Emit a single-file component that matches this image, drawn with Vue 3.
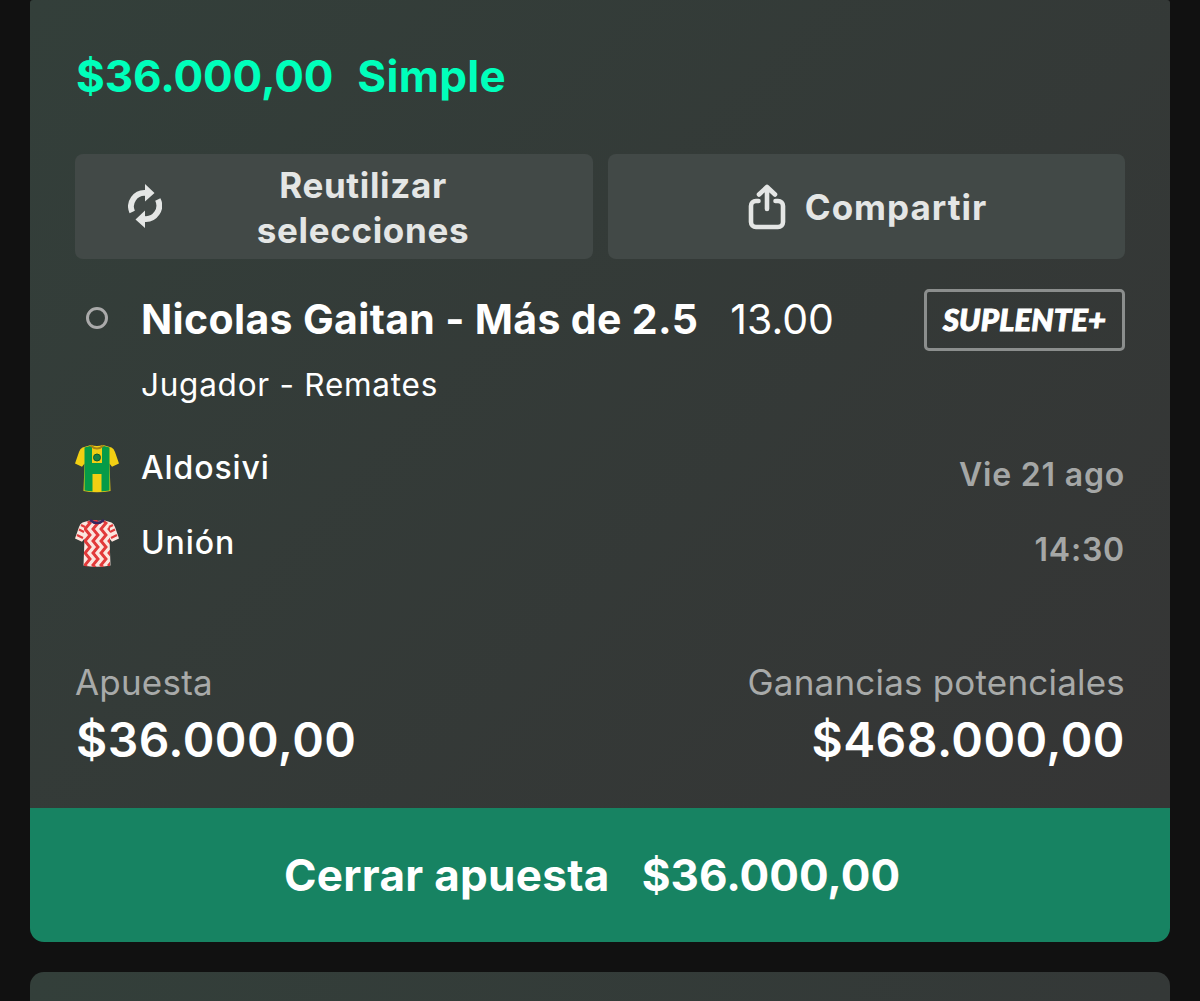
<script setup>
// Left edges of the zigzag stripes on the Unión shirt
const stripes = [-6, 2, 10, 18, 26, 34, 42]
</script>

<template>
  <main class="page">
    <section class="card">
      <div class="body">
        <header class="head"><span class="stake">$36.000,00</span><span>Simple</span></header>
        <div class="actions">
          <button class="btn reuse">
            <svg width="34" height="46" viewBox="0 0 34 46" fill="none">
              <path d="M4.200 29A13.500 13.500 0 0 1 17.500 10M29.800 16.500A13.500 13.500 0 0 1 16.500 36" stroke="#e4e6e5" stroke-width="5.800" />
              <path d="M17 1 26.500 10 17 18.500ZM17 27.500 7.500 36.500 17 45Z" fill="#e4e6e5" />
            </svg>
            <span class="reuse-text">Reutilizar<br />selecciones</span>
          </button>
          <button class="btn share">
            <svg width="38" height="46" viewBox="0 0 38 46" fill="none" stroke="#e4e6e5" stroke-width="4.600" stroke-linecap="round" stroke-linejoin="round">
              <path d="M10.500 17H8a5 5 0 0 0-5 5v16a5 5 0 0 0 5 5h22a5 5 0 0 0 5-5V22a5 5 0 0 0-5-5h-2.500M19 25V3.500M11 10.500l8-7.500 8 7.500" />
            </svg>
            <span>Compartir</span>
          </button>
        </div>
        <div class="selection">
          <i class="dot"></i>
          <span class="pick">Nicolas Gaitan - Más de 2.5</span>
          <span class="odds">13.00</span>
          <span class="badge">SUPLENTE+</span>
        </div>
        <p class="market">Jugador - Remates</p>
        <div class="team">
          <svg class="shirt" width="44" height="50" viewBox="0 0 44 50">
            <path d="M16 2 7.500 4.500Q5 5.500 4 9L0 20.500l7 3.200 2.500-3.200-1 27.500q13.500 2.400 27 0l-1-27.500 2.500 3.200 7-3.200-4-11.500q-1-3.500-3.500-4.500L28 2q-6 2-12 0Z" fill="#f2cf13" />
            <path d="M9.500 4.500 17 2.500V20h10V2.500l7.500 2V47.500q-4 .7-8 1V31h-9v17.500q-4-.3-8-1Z" fill="#069b48" />
            <path d="M15.500 2.500q6.500 6 13 0" fill="none" stroke="#a78315" stroke-width="2" />
            <circle cx="22" cy="14.500" r="3.500" fill="#198245" stroke="#0b5b35" />
          </svg>
          <span>Aldosivi</span><time>Vie 21 ago</time>
        </div>
        <div class="team">
          <svg class="shirt" width="44" height="50" viewBox="0 0 44 50">
            <clipPath id="torso"><path d="M9 5 16 2h12l7 3v43q-13 2-26 0Z" /></clipPath>
            <path d="M16 2 7.500 4.500Q5 5.500 4 9L0 20.500l7 3.200 2.500-3.200-1 27q13.500 2.400 27 0l-1-27 2.500 3.200 7-3.200-4-11.500q-1-3.500-3.500-4.500L28 2q-6 2-12 0Z" fill="#fbe6df" />
            <g clip-path="url(#torso)" fill="none" stroke="#e23a3a" stroke-width="2.900">
              <path v-for="x in stripes" :key="x" :d="`M${x} 0l5 5-5 6 5 6-5 6 5 6-5 6 5 6-5 6 5 6`" />
            </g>
            <path d="M6 7l4 2M4 11.500l5 2.500M2 17l6 3M38 7l-4 2M40 11.500 35 14M42 17l-6 3" stroke="#e23a3a" stroke-width="2.200" />
            <path d="M15 2q7 6 14 0" fill="none" stroke="#35265f" stroke-width="2.600" />
          </svg>
          <span>Unión</span><time>14:30</time>
        </div>
        <div class="totals">
          <div>
            <div class="label">Apuesta</div>
            <div class="value first">$36.000,00</div>
          </div>
          <div class="right">
            <div class="label">Ganancias potenciales</div>
            <div class="value">$468.000,00</div>
          </div>
        </div>
      </div>
      <button class="cashout"><span>Cerrar apuesta</span><span class="amount">$36.000,00</span></button>
    </section>
    <section class="next"></section>
  </main>
</template>

<style>
body { margin: 0; background: #111; }
</style>
<style scoped>
.page { height: 1001px; overflow: hidden; padding: 0 30px; font-family: Inter, "Liberation Sans", sans-serif; color: #fff; white-space: nowrap; }
.page, .page * { box-sizing: border-box; }
.body { height: 808px; padding: 48px 45px 0; border-radius: 3px 3px 0 0; background: linear-gradient(135deg, #333f3a, #353535); }
.head { height: 56px; line-height: 56px; padding-left: 1px; display: flex; gap: 24px; font-size: 44px; font-weight: 700; color: #0fb; letter-spacing: 0.3px; }
.stake { letter-spacing: -0.1px; }
.actions { margin-top: 50px; display: grid; grid-template-columns: 518px 517px; gap: 15px; }
.btn { height: 105px; padding: 0; border: 0; border-radius: 8px; background: #424947; color: #e4e6e5; font: 700 35px/45px Inter, "Liberation Sans", sans-serif; display: flex; align-items: center; justify-content: center; }
.reuse { padding: 2px 29px 0 53px; letter-spacing: 0.65px; }
.reuse svg { margin-top: -3px; }
.reuse-text { flex: 1; }
.share { padding: 1px 0 0 2px; gap: 19px; letter-spacing: 1px; }
.selection { display: flex; align-items: center; margin-top: 30px; height: 62px; }
.dot { width: 22px; height: 22px; border: 3px solid #aaa; border-radius: 50%; margin: 0 33px 5px 11px; }
.pick { font-size: 41px; font-weight: 700; letter-spacing: 0.34px; margin-top: -2px; }
.odds { font-size: 41px; margin: -2px 0 0 32px; }
.badge { margin-left: auto; width: 201px; height: 62px; border: 3px solid #8b8e8d; border-radius: 5px; font: italic 900 31px/54px Lato, sans-serif; letter-spacing: 0.15px; -webkit-text-stroke: 1px #fff; text-align: center; }
.market { margin: 9px 0 0 66px; font-size: 31.5px; line-height: 50px; letter-spacing: 0.75px; }
.market + .team { margin-top: 20px; }
.team { display: flex; align-items: center; height: 75px; font-size: 32px; font-weight: 500; letter-spacing: 0.9px; }
.shirt { margin-right: 22px; }
time { margin: 14px 0 0 auto; color: #a5a7a6; font-weight: 600; letter-spacing: 0.8px; }
.totals { display: flex; justify-content: space-between; margin-top: 77px; }
.label { font-size: 35px; line-height: 50px; color: #a8aaa9; letter-spacing: 0.2px; }
.value { font-size: 48px; line-height: 66px; font-weight: 600; letter-spacing: 0.45px; }
.first { padding-left: 1px; }
.right { text-align: right; }
.cashout { display: flex; width: 100%; height: 134px; border: 0; padding: 0 16px 0 0; border-radius: 0 0 14px 14px; background: #178362; color: #fff; font: 700 44px Inter, "Liberation Sans", sans-serif; letter-spacing: 0.3px; align-items: center; justify-content: center; gap: 32px; }
.amount { letter-spacing: 0; }
.next { margin-top: 30px; height: 29px; border-radius: 14px 14px 0 0; background: linear-gradient(100deg, #333f3a, #343837); }
</style>
